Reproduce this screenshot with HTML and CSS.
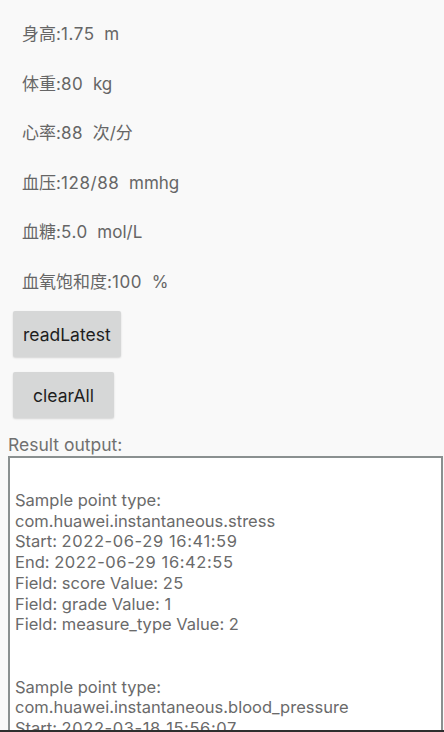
FILE: index.html
```html
<!DOCTYPE html>
<html lang="zh">
<head>
<meta charset="utf-8">
<title>Health</title>
<link rel="stylesheet" href="styles.css">
</head>
<body>
<div class="screen">
  <main class="content">
    <div class="rows">
      <div class="row">身高:<span class="num">1.75</span>  m</div>
      <div class="row">体重:<span class="num">80</span>  kg</div>
      <div class="row">心率:<span class="num">88</span>  次/分</div>
      <div class="row">血压:<span class="num">128/88</span>  mmhg</div>
      <div class="row">血糖:<span class="num">5.0</span>  mol/L</div>
      <div class="row">血氧饱和度:<span class="num">100</span>  %</div>
    </div>
    <div class="buttons">
      <button class="btn">readLatest</button>
      <button class="btn">clearAll</button>
    </div>
    <div class="label">Result output:</div>
    <div class="output">
      <div class="line">&nbsp;</div>
      <div class="line">Sample point type:</div>
      <div class="line">com.huawei.instantaneous.stress</div>
      <div class="line">Start: <span class="num">2022-06-29 16:41:59</span></div>
      <div class="line">End: <span class="num">2022-06-29 16:42:55</span></div>
      <div class="line">Field: score Value: <span class="num">25</span></div>
      <div class="line">Field: grade Value: 1</div>
      <div class="line">Field: measure_type Value: 2</div>
      <div class="line">&nbsp;</div>
      <div class="line">&nbsp;</div>
      <div class="line">Sample point type:</div>
      <div class="line">com.huawei.instantaneous.blood_pressure</div>
      <div class="line">Start: <span class="num">2022-03-18 15:56:07</span></div>
    </div>
  </main>
  <div class="bottom-edge"></div>
</div>
</body>
</html>
```
FILE: styles.css
```css
html, body {
  margin: 0;
  padding: 0;
  background: #f9f9f9;
}
body {
  font-family: Inter, "Noto Sans CJK SC", sans-serif;
}
.screen {
  width: 444px;
  height: 732px;
  display: flex;
  flex-direction: column;
  overflow: hidden;
}
.content {
  flex: 1;
  min-height: 0;
  overflow: hidden;
  padding: 10px 0 0 0;
}
.rows {
  display: flex;
  flex-direction: column;
  padding-left: 22px;
}
.row {
  height: 49.5px;
  line-height: 49.5px;
  font-size: 17px;
  color: #666666;
  white-space: pre;
}
.num {
  letter-spacing: 0.6px;
}
.buttons {
  display: flex;
  flex-direction: column;
  align-items: flex-start;
  gap: 15px;
  padding: 4px 0 0 13px;
}
.btn {
  height: 46px;
  min-width: 101px;
  padding: 0 10px;
  border: none;
  border-radius: 2px;
  background: #d6d7d7;
  box-shadow: 0 1px 2px rgba(0,0,0,0.15);
  font-family: Inter, sans-serif;
  font-size: 17.5px;
  color: #1e1e1e;
}
.label {
  margin-top: 16px;
  padding-left: 8px;
  font-size: 17.5px;
  line-height: 22px;
  color: #707070;
}
.output {
  margin-left: 8px;
  width: 426px;
  border: 2px solid #8a9090;
  background: #ffffff;
  padding: 11px 0 0 5px;
}
.line {
  font-size: 16.5px;
  line-height: 20.75px;
  color: #6a6a6a;
  white-space: pre;
}
.bottom-edge {
  height: 2px;
  background: #2e2e2e;
  flex-shrink: 0;
}
```
